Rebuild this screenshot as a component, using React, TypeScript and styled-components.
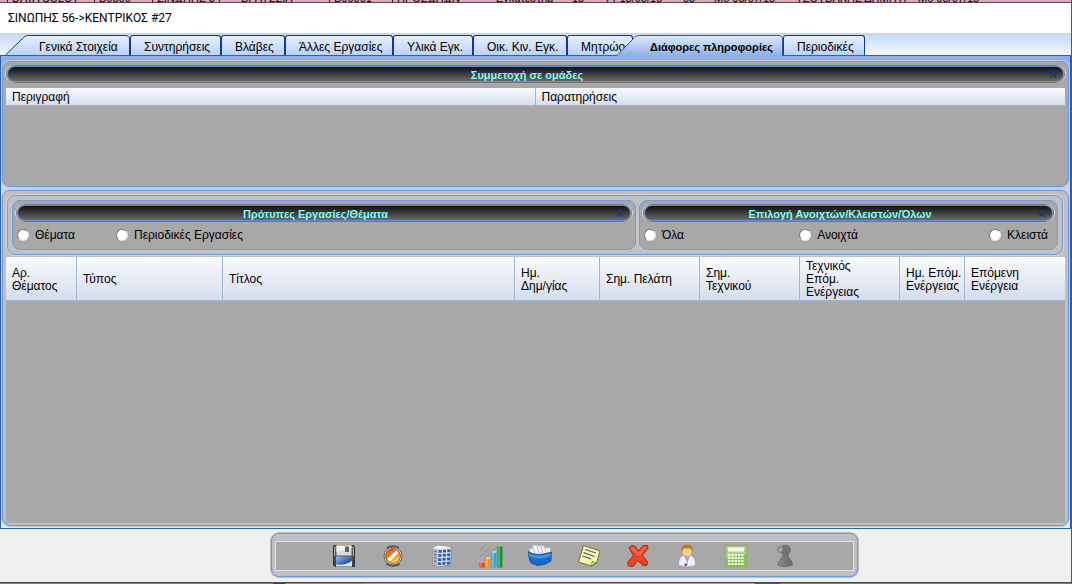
import React, { useState } from "react";
import styled, { createGlobalStyle, css } from "styled-components";

const Global = createGlobalStyle`
  *, *::before, *::after { box-sizing: border-box; }
  body { margin: 0; background: #f0f0f0; }
  body, button, input, table {
    font-family: "Liberation Sans", Arial, sans-serif;
    font-size: 12px;
    line-height: 13px;
    color: #000;
  }
`;

const Window = styled.div`
  display: flex;
  flex-direction: column;
  min-height: 100vh;
  border-right: 1px solid #57565c;
`;

const BackRow = styled.div`
  display: flex;
  align-items: flex-end;
  height: 3px;
  overflow: hidden;
  padding-left: 7px;
  background: #e3a9b5;
  border-bottom: 1px solid #5a4a50;
  font-size: 11px;
  line-height: 8px;
  white-space: nowrap;
`;

const BackCell = styled.span<{ $w: number; $line?: boolean }>`
  flex: none;
  width: ${(p) => p.$w}px;
  height: 8px;
  padding-left: 4px;
  border-left: 1px solid ${(p) => (p.$line ? "#222" : "#c3a3b8")};
`;

const TitleBar = styled.h1`
  margin: 0;
  height: 30px;
  padding: 6px 8px;
  background: #fff;
  font: 400 12px/18px Roboto, "Open Sans", sans-serif;
`;

const TabStrip = styled.div`
  display: flex;
  align-items: flex-end;
  height: 23px;
  padding-left: 5px;
  border-bottom: 1px solid #2f5fae;
  background: linear-gradient(#c3d8f8, #f3f7fd);
`;

const Tab = styled.button<{ $w: number; $slant?: boolean; $active?: boolean }>`
  position: relative;
  z-index: 0;
  flex: none;
  width: ${(p) => p.$w}px;
  height: 20px;
  padding: 3px 0 0 13px;
  border: 1px solid #0a3a94;
  border-bottom: 0;
  border-radius: 3px 3px 0 0;
  background: linear-gradient(#e6effc, #b9d2f6);
  text-align: left;
  white-space: nowrap;
  ${(p) =>
    p.$slant &&
    css`
      padding: 4px 0 0 34px;
      border: 0;
      background: none;
    `}
  ${(p) =>
    p.$active &&
    css`
      z-index: 1;
      height: 21px;
      margin: 0 0 -1px -17px;
      font-size: 11px;
      font-weight: 700;
    `}
`;

const TabShape = styled.svg`
  position: absolute;
  z-index: -1;
  left: 0;
  top: 0;
`;

const Workspace = styled.main`
  flex: 1;
  display: flex;
  flex-direction: column;
  gap: 3px;
  padding: 5px 1px 2px 1px;
  border: solid #2f5fae;
  border-width: 0 1px 1px 1px;
  background: linear-gradient(#8db0e8, #c3d8f8 140px, #dfe9f9);
`;

const Panel = styled.section<{ $ring?: boolean; $grow?: boolean }>`
  display: flex;
  flex-direction: column;
  min-width: 0;
  ${(p) => p.$grow && "flex: 1;"}
  border: 1px solid #6c9be0;
  border-radius: 8px;
  box-shadow: 0 0 0 1px #c6c8cc;
  background: ${(p) => (p.$ring ? "#c0c0c0" : "#a8a8a8")};
`;

const GroupsPanel = styled(Panel)`
  margin: 4px 5px 0 4px;
  box-shadow: 0 0 0 1px #d6d4d2;
`;

const Groups = styled.div`
  display: grid;
  grid-template-columns: 624fr 419fr;
  gap: 3px;
  padding: 4px;
`;

const Caption = styled.h2`
  position: relative;
  display: flex;
  justify-content: center;
  margin: 4px 4px 0;
  padding: 2px 17px 0 0;
  height: 16px;
  border: 1px solid #5f8fd6;
  border-radius: 8px;
  box-shadow: 0 0 0 1px #77777a, -1px 0 0 1px #d8d8d8, 1px 0 0 1px #d8d8d8;
  background: linear-gradient(#101010, #6a6a6a);
  color: #7ffcff;
  font-size: 11px;
  line-height: 13px;
  font-weight: 700;
  white-space: nowrap;
`;

const Collapse = styled.button`
  position: absolute;
  right: 5px;
  top: 2px;
  width: 10px;
  height: 10px;
  padding: 0;
  border: 0;
  background: none;
  svg { display: block; }
`;

const Grid = styled.table`
  width: 100%;
  table-layout: fixed;
  border-collapse: separate;
  border-spacing: 0;
`;

const Th = styled.th<{ $h: number }>`
  height: ${(p) => p.$h}px;
  padding: 2px 0 0 6px;
  border-bottom: 1px solid #9db7d3;
  border-right: 1px solid #9db7d3;
  background: linear-gradient(#f9fbfd, #d5dcec);
  font-weight: 400;
  text-align: left;
  vertical-align: middle;
  white-space: pre;
  &:last-child { border-right: 0; }
`;

const GridArea = styled.div<{ $min: number; $m: string }>`
  flex: 1;
  min-height: ${(p) => p.$min}px;
  margin: ${(p) => p.$m};
  background: #a8a8a8;
`;

const Options = styled.div<{ $cols: string }>`
  display: grid;
  grid-template-columns: ${(p) => p.$cols};
  align-items: center;
  height: 28px;
  padding: 0 9px 0 4px;
`;

const Option = styled.label`
  display: flex;
  align-items: center;
  gap: 6px;
  white-space: nowrap;
`;

const Radio = styled.input`
  appearance: none;
  width: 12px;
  height: 12px;
  margin: 0;
  border: 1px solid;
  border-color: #777 #e6e6e6 #e6e6e6 #777;
  border-radius: 50%;
  background: #fff;
  &:checked { background: radial-gradient(#000 2px, #fff 3px); }
`;

const Footer = styled.footer`
  display: flex;
  justify-content: center;
  padding: 4px 0 5px 58px;
`;

const Toolbar = styled.div`
  padding: 7px 3px 5px;
  width: 587px;
  border: 1px solid #6c9be0;
  border-radius: 8px;
  box-shadow: 0 0 0 1px #b9bbbf;
  background: #c0c0c0;
`;

const ToolbarInner = styled.div`
  display: flex;
  justify-content: center;
  align-items: center;
  gap: 25px;
  height: 30px;
  border: 1px solid #e2e2e2;
  background: #a8a8a8;
`;

const Tool = styled.button`
  width: 24px;
  height: 24px;
  padding: 0;
  border: 0;
  background: none;
  svg { display: block; }
`;

const BottomEdge = styled.div`
  height: 2px;
  border-top: 1px solid #47484c;
  background: linear-gradient(90deg, #808080 273px, #404a40 273px 285px, #b98a3c 285px 363px, #9aa0ac 363px 755px, #3f5f86 755px 780px, #808080 780px);
`;

const backCells: [string, number, boolean?][] = [
  ["DATA SOLUT", 87, true],
  ["B0800", 58, true],
  ["ΣΙΝΩΠΗΣ 34", 84, true],
  ["ΒΡΑΥΣΣΙΑ", 93],
  ["B00001", 63, true],
  ["ΠΡΟΣΩΠΩΝ", 99, true],
  ["Εγκατεστημ", 76],
  ["18", 34],
  ["Fr 18/05/18", 77],
  ["58", 31],
  ["Mo 08/07/18", 82],
  ["ΤΣΟΥΒΑΚΗΣ ΔΗΜΗΤΡ", 122],
  ["Mo 08/07/18", 85],
];

const tabs: { text: string; w: number; slant?: boolean }[] = [
  { text: "Γενικά Στοιχεία", w: 125, slant: true },
  { text: "Συντηρήσεις", w: 91 },
  { text: "Βλάβες", w: 64 },
  { text: "Άλλες Εργασίες", w: 108 },
  { text: "Υλικά Εγκ.", w: 80 },
  { text: "Οικ. Κιν. Εγκ.", w: 94 },
  { text: "Μητρώο", w: 66 },
  { text: "Διάφορες πληροφορίες", w: 167, slant: true },
  { text: "Περιοδικές", w: 82 },
];

const columns: { text: string; w?: number }[] = [
  { text: "Αρ.\nΘέματος", w: 71 },
  { text: "Τύπος", w: 146 },
  { text: "Τίτλος" },
  { text: "Ημ.\nΔημ/γίας", w: 85 },
  { text: "Σημ. Πελάτη", w: 100 },
  { text: "Σημ.\nΤεχνικού", w: 100 },
  { text: "Τεχνικός\nΕπόμ.\nΕνέργειας", w: 100 },
  { text: "Ημ. Επόμ.\nΕνέργειας", w: 65 },
  { text: "Επόμενη\nΕνέργεια", w: 100 },
];

function SlantShape({ w, active }: { w: number; active: boolean }) {
  const id = active ? "tabActive" : "tabFirst";
  const h = active ? 21 : 20;
  const d = `M0.5 ${h} L18.5 2.5 Q20.5 0.5 23.5 0.5 H${w - 3} L${w - 0.5} 3 V${h}`;
  return (
    <TabShape width={w} height={h} viewBox={`0 0 ${w} ${h}`} aria-hidden="true">
      <defs>
        <linearGradient id={id} x1="0" y1="0" x2="0" y2="1">
          <stop offset="0" stopColor={active ? "#dfebfd" : "#e6effc"} />
          <stop offset="1" stopColor={active ? "#8db0e8" : "#b9d2f6"} />
        </linearGradient>
      </defs>
      <path d={`${d} Z`} fill={`url(#${id})`} />
      <path d={d} fill="none" stroke={active ? "#2f5c9c" : "#0a3a94"} />
    </TabShape>
  );
}

function Bar({ children }: { children: string }) {
  return (
    <Caption>
      {children}
      <Collapse aria-label="Σύμπτυξη">
        <svg width="10" height="10" viewBox="0 0 10 10" fill="none" stroke="#1b3a6c" strokeWidth="1.6">
          <path d="M2 5 L5 2 L8 5 M2 8.500 L5 5.500 L8 8.500" />
        </svg>
      </Collapse>
    </Caption>
  );
}

function RadioGroup({ name, items, cols }: { name: string; items: string[]; cols: string }) {
  return (
    <Options $cols={cols} role="radiogroup">
      {items.map((t) => (
        <Option key={t}>
          <Radio type="radio" name={name} />
          {t}
        </Option>
      ))}
    </Options>
  );
}

const officeWindows = Array.from({ length: 12 }, (_, i) => {
  const c = i % 3;
  const r = Math.floor(i / 3);
  return <rect key={i} x={8.5 + c * 4.4 - r * 0.2} y={6 + r * 4.1 - c * 0.3} width="3.2" height="2.8" fill="#2a5cbc" />;
});

const tools: { label: string; art: React.ReactNode }[] = [
  {
    label: "Αποθήκευση",
    art: (
      <>
        <defs>
          <linearGradient id="diskBody" x1="0" y1="0" x2="0" y2="1">
            <stop offset="0" stopColor="#6d7277" />
            <stop offset="1" stopColor="#3a3c40" />
          </linearGradient>
          <linearGradient id="diskLabel" x1="0" y1="0" x2="1" y2="1">
            <stop offset="0" stopColor="#9cc3f2" />
            <stop offset="0.6" stopColor="#2c5fb4" />
          </linearGradient>
        </defs>
        <path d="M1.500 1.500 H22 L22.500 2.500 V22.500 H3 L1.500 21 Z" fill="url(#diskBody)" stroke="#303236" />
        <path d="M2.500 3 V12 M21.500 3 V12" stroke="#a4a8ac" />
        <rect x="4.500" y="1.500" width="15" height="10" fill="#d9dbdd" />
        <path d="M4.500 1.500 H19.500 V4 L4.500 8 Z" fill="#f0f1f2" />
        <rect x="13" y="2.500" width="4" height="5.500" fill="#62666b" />
        <rect x="4" y="12.500" width="16" height="10" fill="url(#diskLabel)" />
        <path d="M4 22.500 V20.500 Q14 21.500 20 17 V22.500 Z" fill="#dfe6f1" />
      </>
    ),
  },
  {
    label: "Ακύρωση",
    art: (
      <>
        <defs>
          <linearGradient id="noFill" x1="0" y1="0" x2="0.5" y2="1">
            <stop offset="0.2" stopColor="#e2601c" />
            <stop offset="0.6" stopColor="#f58a1c" />
            <stop offset="1" stopColor="#ffdd2a" />
          </linearGradient>
        </defs>
        <path d="M5.500 3 Q12 -0.500 18.500 3 L17 6 H7 Z M6 18 H18 L19 21 Q12 24.500 5 21 Z" fill="#5c5c5c" />
        <circle cx="12" cy="12" r="9" fill="#dedede" stroke="#4a4a4a" strokeWidth="0.8" />
        <circle cx="12" cy="12" r="7.400" fill="url(#noFill)" stroke="#8c3c10" strokeWidth="0.8" />
        <path d="M7.500 16.500 L16.500 7.500" stroke="#fff" strokeWidth="3.200" />
      </>
    ),
  },
  {
    label: "Κτίριο",
    art: (
      <>
        <path d="M2.500 4 L8 1.500 L21.500 3 L20.500 21 L7.500 23 L3 20 Z" fill="#dfe3e8" stroke="#7f858c" strokeWidth="0.8" />
        <path d="M2.500 4 L7.500 5 V23 L3 20 Z" fill="#b5b9be" />
        <path d="M2.500 4 L8 1.500 L21.500 3 L7.500 5 Z" fill="#f2f3f4" />
        <path d="M4 7 L6.500 7.800 M4 10 L6.500 11 M4 13.200 L6.500 14.500 M4 16.500 L6.500 18" stroke="#60666e" strokeWidth="1.200" />
        {officeWindows}
      </>
    ),
  },
  {
    label: "Στατιστικά",
    art: (
      <>
        <path d="M1 13 L13 1.500 M2 6 L6 1.500 M5 15 L18 3" stroke="#8a8a8a" strokeWidth="0.8" />
        <path d="M0.500 18 H5.500 V23.500 H0.500 Z" fill="#e2431e" />
        <ellipse cx="3" cy="18" rx="2.500" ry="1" fill="#f69a7c" />
        <path d="M6.500 14 H11.500 V23.500 H6.500 Z" fill="#f2920c" />
        <ellipse cx="9" cy="14" rx="2.500" ry="1" fill="#ffd080" />
        <path d="M12.500 8 H17.500 V23.500 H12.500 Z" fill="#2ba6ea" />
        <ellipse cx="15" cy="8" rx="2.500" ry="1" fill="#a5e0fa" />
        <path d="M18.500 1.500 H23.500 V23.500 H18.500 Z" fill="#17952a" />
        <ellipse cx="21" cy="1.500" rx="2.500" ry="1" fill="#7fd487" />
        <path d="M2 19 V23 M8 15 V23 M14 9 V23 M20 2.500 V23" stroke="#fff" strokeOpacity="0.5" />
      </>
    ),
  },
  {
    label: "Αρχείο",
    art: (
      <>
        <path d="M1.500 9 L1.500 5 L5 4 L4.500 1.500 L9 1 L12 2.500 L13 1 L16 2 L17 4 L22.500 3.500 L22.500 9 L12 12 Z" fill="#f3f3f3" stroke="#b4b4b4" strokeWidth="0.7" />
        <path d="M5 4 L7 9 M9 2 L11 9 M13 2 L14.500 9 M17 4 L18 9" stroke="#b4b4b4" strokeWidth="0.8" />
        <path d="M0.500 7.500 Q8 13 23.500 8 L23 17 Q17 21.500 9 21.500 L3 19 Q0.500 15 0.500 7.500 Z" fill="#1a69cc" stroke="#0f468f" strokeWidth="0.7" />
        <path d="M1 9 Q9 14 23 9.500 L23 12 Q10 17 1.500 12.500 Z" fill="#4293e6" />
      </>
    ),
  },
  {
    label: "Σημείωση",
    art: (
      <>
        <path d="M6.500 1.500 L23 7 L19.500 19 L14.500 22 L1.500 18 Z" fill="#faf7ac" stroke="#6a6530" strokeWidth="0.9" />
        <path d="M14.500 22 L15 17.500 L19.500 19 Z" fill="#ddd576" stroke="#6a6530" strokeWidth="0.7" />
        <path d="M8 5.500 L19 9 M6.500 8.700 L17.500 12.500 M5.500 12 L14 14.800" stroke="#525b9c" strokeWidth="1.300" />
      </>
    ),
  },
  {
    label: "Διαγραφή",
    art: (
      <>
        <path d="M3 4 L6 1.500 L9.500 2.500 L12.500 7 L17 1.500 L21.500 1.500 L22 4 L16.500 11.500 L21.500 17.500 L21 21 L17.500 22 L12 16.500 L7 22.500 L2.500 22 L1.500 18.500 L7.500 11.500 Z" fill="#ec4420" stroke="#b5240e" strokeLinejoin="round" />
        <path d="M4.500 4.500 L6.500 3 L9 4 L12.500 9.500 L17.500 3 L20.500 3 L14 11.500 L12 12 Z" fill="#f8694a" />
      </>
    ),
  },
  {
    label: "Πελάτης",
    art: (
      <>
        <path d="M3.500 21.500 Q3 13 8.500 11.500 H15.500 Q21 13 20.500 21.500 Q12 24.500 3.500 21.500 Z" fill="#eceefa" stroke="#9397c8" strokeWidth="0.8" />
        <path d="M8.500 11.500 L12 22 L15.500 11.500 Z" fill="#86b4f0" />
        <path d="M8 12 L11.500 20 M16 12 L13.500 19" stroke="#fafbff" strokeWidth="1.600" />
        <ellipse cx="12" cy="7.500" rx="5" ry="5.300" fill="#ffca8e" stroke="#c98540" strokeWidth="0.6" />
        <path d="M6.500 8 Q5.500 0.500 12 0.500 Q18.500 0.500 17.500 8 Q17 5 14.500 4.200 Q10 4 8.500 4.500 Q7 6 6.500 8 Z" fill="#b57a1a" />
        <rect x="9.500" y="19.500" width="2.500" height="2.500" fill="#e03030" />
      </>
    ),
  },
  {
    label: "Υπολογισμός",
    art: (
      <>
        <rect x="1.500" y="1.500" width="21" height="21" fill="#8dc459" stroke="#82b955" />
        <path d="M2 2 H22 V9 L2 15 Z" fill="#a9d67c" />
        <rect x="4" y="3.500" width="16" height="4" fill="#f6faf0" />
        {Array.from({ length: 20 }, (_, i) => (
          <rect key={i} x={4 + (i % 5) * 3.3} y={10 + Math.floor(i / 5) * 3} width="2.400" height="2" fill="#eff7e4" />
        ))}
      </>
    ),
  },
  {
    label: "Χρήστης",
    art: (
      <>
        <defs>
          <linearGradient id="pawn" x1="0" y1="0" x2="1" y2="0">
            <stop offset="0" stopColor="#8a8a8a" />
            <stop offset="1" stopColor="#666" />
          </linearGradient>
        </defs>
        <path d="M10 10 H15 Q15 13 17 15 Q20 18 19.500 21 Q12 24.500 4.500 21 Q4.500 18 7.500 15 Q10 13 10 10 Z" fill="url(#pawn)" stroke="#686868" strokeWidth="0.7" />
        <circle cx="12.500" cy="6" r="5" fill="#747474" stroke="#686868" strokeWidth="0.7" />
        <circle cx="7.500" cy="5.500" r="3" fill="#949494" stroke="#6a6a6a" strokeDasharray="1.500 1" />
        <circle cx="7.500" cy="5.500" r="1.200" fill="#bcbcbc" />
      </>
    ),
  },
];

export default function App() {
  const [active, setActive] = useState(7);
  return (
    <>
      <Global />
      <Window>
        <BackRow aria-hidden="true">
          {backCells.map(([t, w, line], i) => (
            <BackCell key={i} $w={w} $line={line}>{t}</BackCell>
          ))}
        </BackRow>
        <TitleBar>{"ΣΙΝΩΠΗΣ 56->ΚΕΝΤΡΙΚΟΣ #27"}</TitleBar>
        <TabStrip role="tablist">
          {tabs.map((t, i) => (
            <Tab
              key={t.text}
              role="tab"
              aria-selected={active === i}
              $w={t.w}
              $slant={t.slant}
              $active={i === 7}
              onClick={() => setActive(i)}
            >
              {t.slant && <SlantShape w={t.w} active={i === 7} />}
              {t.text}
            </Tab>
          ))}
        </TabStrip>
        <Workspace>
          <Panel>
            <Bar>Συμμετοχή σε ομάδες</Bar>
            <GridArea $min={98} $m="6px 3px 0 3px">
              <Grid>
                <thead>
                  <tr>
                    <Th $h={18}>Περιγραφή</Th>
                    <Th $h={18}>Παρατηρήσεις</Th>
                  </tr>
                </thead>
              </Grid>
            </GridArea>
          </Panel>
          <Panel $ring $grow>
            <GroupsPanel $ring>
              <Groups>
                <Panel>
                  <Bar>Πρότυπες Εργασίες/Θέματα</Bar>
                  <RadioGroup name="kind" items={["Θέματα", "Περιοδικές Εργασίες"]} cols="99px auto" />
                </Panel>
                <Panel>
                  <Bar>Επιλογή Ανοιχτών/Κλειστών/Όλων</Bar>
                  <RadioGroup name="state" items={["Όλα", "Ανοιχτά", "Κλειστά"]} cols="156fr 191fr auto" />
                </Panel>
              </Groups>
            </GroupsPanel>
            <GridArea $min={120} $m="2px 3px 2px 3px">
              <Grid>
                <colgroup>
                  {columns.map((c) => (
                    <col key={c.text} style={c.w ? { width: c.w } : undefined} />
                  ))}
                </colgroup>
                <thead>
                  <tr>
                    {columns.map((c) => (
                      <Th key={c.text} $h={44}>{c.text}</Th>
                    ))}
                  </tr>
                </thead>
              </Grid>
            </GridArea>
          </Panel>
        </Workspace>
        <Footer>
          <Toolbar role="toolbar">
            <ToolbarInner>
              {tools.map((t) => (
                <Tool key={t.label} aria-label={t.label}>
                  <svg width="24" height="24" viewBox="0 0 24 24" fill="none">{t.art}</svg>
                </Tool>
              ))}
            </ToolbarInner>
          </Toolbar>
        </Footer>
        <BottomEdge />
      </Window>
    </>
  );
}
